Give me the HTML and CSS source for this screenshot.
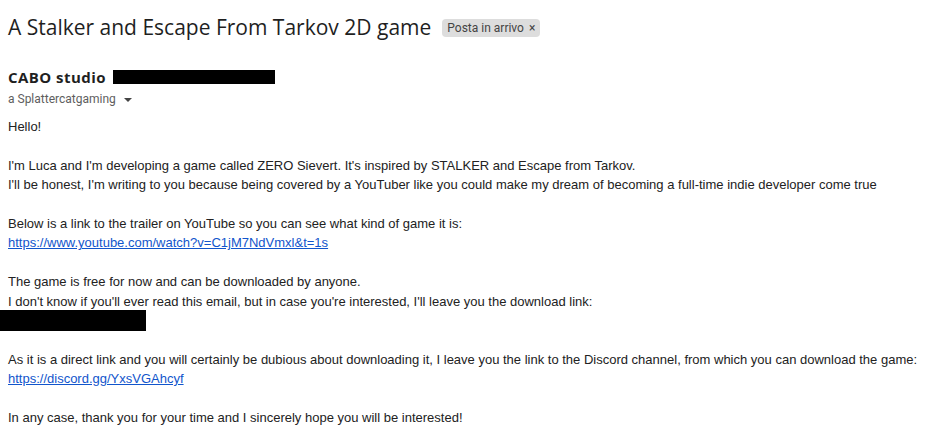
FILE: index.html
```html
<!DOCTYPE html>
<html>
<head>
<meta charset="utf-8">
<link rel="stylesheet" href="styles.css">
</head>
<body>
<div class="subject-row">
  <h1 class="subject">A Stalker and Escape From Tarkov 2D game</h1>
  <span class="chip">Posta in arrivo <span class="chip-x">×</span></span>
</div>
<div class="sender">
  <div class="from"><span class="name">CABO studio</span><span class="redact-email"></span></div>
  <div class="to">a Splattercatgaming <span class="caret"></span></div>
</div>
<div class="body">
  <div>Hello!</div>
  <div class="blank"></div>
  <div>I'm Luca and I'm developing a game called ZERO Sievert. It's inspired by STALKER and Escape from Tarkov.</div>
  <div>I'll be honest, I'm writing to you because being covered by a YouTuber like you could make my dream of becoming a full-time indie developer come true</div>
  <div class="blank"></div>
  <div>Below is a link to the trailer on YouTube so you can see what kind of game it is:</div>
  <div><a href="#">https://www.youtube.com/watch?v=C1jM7NdVmxl&amp;t=1s</a></div>
  <div class="blank"></div>
  <div>The game is free for now and can be downloaded by anyone.</div>
  <div>I don't know if you'll ever read this email, but in case you're interested, I'll leave you the download link:</div>
  <div class="redact-row"><span class="redact-link"></span></div>
  <div class="blank"></div>
  <div>As it is a direct link and you will certainly be dubious about downloading it, I leave you the link to the Discord channel, from which you can download the game:</div>
  <div><a href="#">https://discord.gg/YxsVGAhcyf</a></div>
  <div class="blank"></div>
  <div>In any case, thank you for your time and I sincerely hope you will be interested!</div>
</div>
</body>
</html>
```
FILE: styles.css
```css
html, body {
  margin: 0;
  padding: 0;
  background: #fff;
}
body {
  padding: 0 8px;
  font-family: Roboto, "Liberation Sans", sans-serif;
  color: #1f1f1f;
}
.subject-row {
  display: flex;
  align-items: center;
  gap: 11px;
  padding-top: 12px;
  height: 30px;
}
.subject {
  margin: 0;
  font-family: "Open Sans", Roboto, sans-serif;
  font-weight: 400;
  font-size: 21px;
  line-height: 28px;
  color: #1f1f1f;
}
.chip {
  background: #dddddd;
  border-radius: 4px;
  font-size: 12px;
  line-height: 18px;
  padding: 0 5px;
  color: #444;
  margin-top: 2px;
}
.chip-x {
  font-size: 12px;
  margin-left: 2px;
}
.sender {
  margin-top: 25px;
}
.from {
  display: flex;
  align-items: center;
  height: 20px;
}
.name {
  font-family: "Open Sans", Roboto, sans-serif;
  font-weight: 700;
  font-size: 15px;
  letter-spacing: 0.45px;
  color: #1f1f1f;
}
.redact-email {
  display: inline-block;
  width: 162px;
  height: 14px;
  background: #000;
  margin-left: 7px;
}
.to {
  font-size: 12px;
  color: #5e5e5e;
  height: 20px;
  line-height: 20px;
  margin-top: 2px;
}
.caret {
  display: inline-block;
  width: 0;
  height: 0;
  border-left: 4px solid transparent;
  border-right: 4px solid transparent;
  border-top: 4px solid #444;
  margin-left: 5px;
  vertical-align: middle;
}
.body {
  margin-top: 8px;
  font-family: "Liberation Sans", Arial, sans-serif;
  font-size: 13px;
  line-height: 19.4px;
  color: #222;
}
.blank {
  height: 19.4px;
}
.body a {
  color: #1155cc;
  text-decoration: underline;
}
.redact-row {
  height: 19.4px;
  display: flex;
  align-items: center;
}
.redact-link {
  display: inline-block;
  width: 146px;
  height: 21px;
  background: #000;
  margin-left: -8px;
}
```
